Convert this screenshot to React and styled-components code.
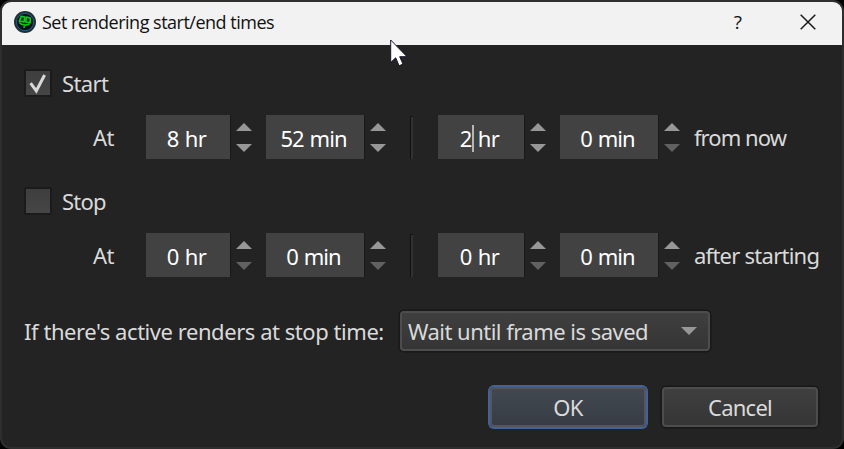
import React, { useState } from 'react'
import styled, { createGlobalStyle } from 'styled-components'

const App = () => {
  const [start, setStart] = useState(true)
  const [stop, setStop] = useState(false)

  return (
    <>
      <GlobalStyle />
      <Window>
        <TitleBar>
          <AppLogo />
          <Title>Set rendering start/end times</Title>
          <HelpButton>?</HelpButton>
          <CloseButton>
            <svg width='16' height='16' viewBox='0 0 16 16'>
              <path
                d='M0.7 0.7L15.3 15.3M15.3 0.7L0.7 15.3'
                stroke='#1a1a1a'
                strokeWidth='1.5'
              />
            </svg>
          </CloseButton>
        </TitleBar>

        <Body>
          <CheckRow onClick={() => setStart(!start)}>
            <CheckBox>{start && <CheckMark />}</CheckBox>
            <Label $spacing='-0.6px'>Start</Label>
          </CheckRow>
          <TimeRow>
            <AtLabel>At</AtLabel>
            <SpinBox width={84} value='8' unit='hr' canLower />
            <SpinBox width={98} value='52' unit='min' canLower />
            <Separator />
            <SpinBox width={86} value='2' unit='hr' canLower focused />
            <SpinBox width={98} value='0' unit='min' />
            <Label $spacing='-0.95px'>from now</Label>
          </TimeRow>

          <CheckRow onClick={() => setStop(!stop)}>
            <CheckBox>{stop && <CheckMark />}</CheckBox>
            <Label $spacing='-0.8px'>Stop</Label>
          </CheckRow>
          <TimeRow>
            <AtLabel>At</AtLabel>
            <SpinBox width={84} value='0' unit='hr' />
            <SpinBox width={98} value='0' unit='min' />
            <Separator />
            <SpinBox width={86} value='0' unit='hr' />
            <SpinBox width={98} value='0' unit='min' />
            <Label $spacing='-0.75px'>after starting</Label>
          </TimeRow>

          <ActionRow>
            <Label $spacing='-0.45px'>
              If there's active renders at stop time:
            </Label>
            <Select>
              <Label $spacing='-0.52px'>Wait until frame is saved</Label>
              <Arrow down />
            </Select>
          </ActionRow>

          <Footer>
            <Button $primary>OK</Button>
            <Button>Cancel</Button>
          </Footer>
        </Body>
      </Window>
      <Pointer />
    </>
  )
}

export default App

const Arrow = ({ down, dim }) => (
  <svg width='16' height='8' viewBox='0 0 16 8'>
    <path
      d={down ? 'M0 0H16L8 8Z' : 'M0 8H16L8 0Z'}
      fill={dim ? '#616161' : '#979797'}
    />
  </svg>
)

const CheckMark = () => (
  <svg width='24' height='24' viewBox='0 0 24 24'>
    <path
      d='M4.6 12.2L10.3 20L18.6 4'
      fill='none'
      stroke='#d9d9d9'
      strokeWidth='3'
    />
  </svg>
)

const SpinBox = ({ width, value, unit, canLower, focused }) => (
  <SpinWrapper>
    <Field $width={width} $tight={unit === 'min'}>
      {value}
      {focused && <Caret />} {unit}
    </Field>
    <Steppers>
      <Arrow />
      <Arrow down dim={!canLower} />
    </Steppers>
  </SpinWrapper>
)

const AppLogo = () => (
  <svg width='22' height='22' viewBox='0 0 22 22'>
    <circle cx='11' cy='11' r='11' fill='#252f35' />
    <circle
      cx='11'
      cy='11'
      r='8.6'
      fill='#071018'
      stroke='#1a6694'
      strokeWidth='0.9'
    />
    <g fill='#06300c' stroke='#12c41b' strokeWidth='1.7'>
      <path d='M7.2 5.4L10.9 6L10.1 10.8L5.3 10.2Z' strokeLinejoin='round' />
      <path d='M12.4 6.2L16.2 7L16.2 11.7L11.6 11Z' strokeLinejoin='round' />
      <path
        d='M5.2 11.5C7.5 14.2 12.5 15 15.7 12.6'
        fill='none'
        strokeWidth='1.7'
      />
    </g>
    <circle cx='10.2' cy='16' r='1.1' fill='#12c41b' />
  </svg>
)

const Pointer = () => (
  <PointerIcon width='19' height='29' viewBox='0 0 19 29'>
    <path
      d='M0.7 1V23.5L5.7 18.8L9.1 26.8L13 25.1L9.7 17.7H17Z'
      fill='#fff'
      stroke='#14142a'
      strokeWidth='1'
    />
  </PointerIcon>
)

const GlobalStyle = createGlobalStyle`
  * {
    box-sizing: border-box;
  }
  body {
    margin: 0;
    background: #000;
    overflow: hidden;
    font-family: 'Noto Sans', 'Liberation Sans', sans-serif;
    font-size: 22px;
  }
  svg {
    display: block;
    flex-shrink: 0;
  }
`

const Window = styled.div`
  width: 844px;
  height: 449px;
  border: 2px solid #2e2e2e;
  border-radius: 11px;
  overflow: hidden;
  background: #232323;
  display: flex;
  flex-direction: column;
`

const TitleBar = styled.div`
  display: flex;
  align-items: center;
  height: 43px;
  padding: 0 26px 3px 12px;
  background: #f2f2f2;
  color: #111;
`

const Title = styled.span`
  flex: 1;
  margin-left: 6px;
  font-family: 'Open Sans', sans-serif;
  font-size: 18px;
  line-height: 24px;
  letter-spacing: -0.5px;
  white-space: nowrap;
`

const HelpButton = styled.span`
  font-family: 'Open Sans', sans-serif;
  font-size: 19px;
  line-height: 26px;
  margin-right: 58px;
`

const CloseButton = styled.span`
  display: flex;
`

const Body = styled.div`
  display: flex;
  flex-direction: column;
  padding: 24px 24px 0 22px;
  color: #dadada;
`

const Label = styled.span`
  letter-spacing: ${({ $spacing }) => $spacing || '0'};
  line-height: 30px;
  white-space: nowrap;
`

const CheckRow = styled.div`
  display: flex;
  align-items: center;
  gap: 10px;
  height: 28px;
`

const CheckBox = styled.div`
  width: 28px;
  height: 28px;
  border: 2px solid #1b1b1b;
  border-radius: 2px;
  background: linear-gradient(#3e3e3e, #464646);
`

const TimeRow = styled.div`
  display: flex;
  align-items: center;
  height: 44px;
  margin: 18px 0 28px;
`

const AtLabel = styled(Label)`
  flex-shrink: 0;
  width: 122px;
  padding-left: 69px;
  letter-spacing: -0.5px;
`

const SpinWrapper = styled.div`
  display: flex;
  flex-shrink: 0;
`

const Field = styled.div`
  width: ${({ $width }) => $width}px;
  height: 44px;
  padding: 1px 3px 0 0;
  background: #424242;
  box-shadow: 1px 0 #191919;
  color: #fff;
  line-height: 44px;
  text-align: center;
  letter-spacing: ${({ $tight }) => ($tight ? '-0.95px' : '-0.6px')};
  word-spacing: 1px;
  white-space: nowrap;
`

const Caret = styled.span`
  position: absolute;
  width: 2px;
  height: 27px;
  margin: 9px 0 0 0;
  background: #b5b5b5;
`

const Steppers = styled.div`
  display: flex;
  flex-direction: column;
  gap: 13px;
  width: 36px;
  padding: 8px 0 0 6px;
`

const Separator = styled.div`
  flex-shrink: 0;
  width: 3px;
  height: 43px;
  margin: 0 25px 0 10px;
  background: #323232;
  border-left: 1px solid #111;
  border-top: 1px solid #111;
`

const ActionRow = styled.div`
  display: flex;
  align-items: center;
  justify-content: space-between;
  width: 686px;
  height: 44px;
  margin-top: 4px;
`

const Select = styled.div`
  display: flex;
  align-items: center;
  justify-content: space-between;
  width: 310px;
  height: 40px;
  padding: 0 11px 0 6px;
  border: 2px solid #4d4d4d;
  border-radius: 4px;
  background: linear-gradient(#3f3f3f, #353535);
  box-shadow: 0 0 0 1.5px #191919;
`

const Footer = styled.div`
  display: flex;
  justify-content: flex-end;
  gap: 16px;
  margin-top: 34px;
`

const Button = styled.button`
  width: 156px;
  height: 40px;
  padding: 0;
  border: 2px solid ${({ $primary }) => ($primary ? '#53575d' : '#4d4d4d')};
  border-radius: 4px;
  background: ${({ $primary }) =>
    $primary
      ? 'linear-gradient(#424850, #383d45)'
      : 'linear-gradient(#3f3f3f, #353535)'};
  box-shadow: 0 0 0 ${({ $primary }) =>
    $primary ? '2px #43619a' : '1.5px #191919'};
  color: #dadada;
  font: inherit;
  line-height: 36px;
  letter-spacing: -0.75px;
`

const PointerIcon = styled.svg`
  position: absolute;
  left: 390px;
  top: 39px;
`
